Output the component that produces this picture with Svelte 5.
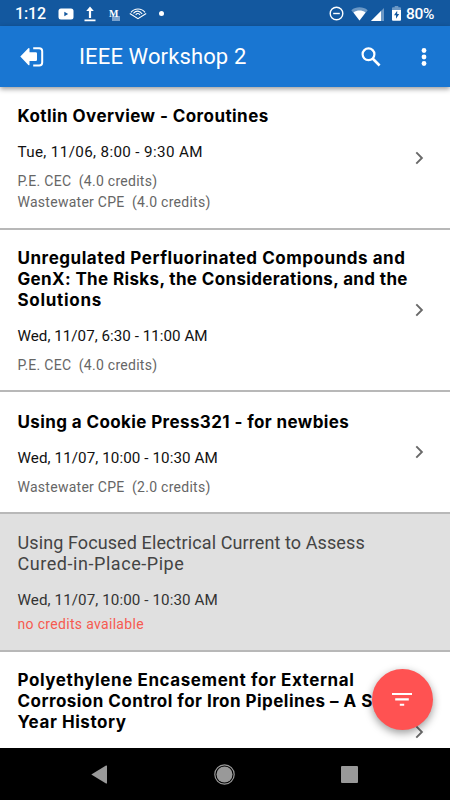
<script>
  const sessions = [
    {
      height: 143, top: 18,
      lines: [['Kotlin Overview - Coroutines', 0.43]],
      date: ['Tue, 11/06, 8:00 - 9:30 AM', 0.36],
      credits: [['P.E. CEC', '(4.0 credits)'], ['Wastewater CPE', '(4.0 credits)']]
    },
    {
      height: 162, top: 17,
      lines: [
        ['Unregulated Perfluorinated Compounds and', 0.54],
        ['GenX: The Risks, the Considerations, and the', 0.36],
        ['Solutions', 0.7]
      ],
      date: ['Wed, 11/07, 6:30 - 11:00 AM', 0.02],
      credits: [['P.E. CEC', '(4.0 credits)']]
    },
    {
      height: 122, top: 18.5,
      lines: [['Using a Cookie Press321 - for newbies', 0.39]],
      date: ['Wed, 11/07, 10:00 - 10:30 AM', 0.08],
      credits: [['Wastewater CPE', '(2.0 credits)']]
    },
    {
      height: 138, top: 17, disabled: true,
      lines: [['Using Focused Electrical Current to Assess', 0.1], ['Cured-in-Place-Pipe', 0.55]],
      date: ['Wed, 11/07, 10:00 - 10:30 AM', 0.08],
      credits: []
    },
    {
      height: 162, top: 17,
      lines: [
        ['Polyethylene Encasement for External', 0.58],
        ['Corrosion Control for Iron Pipelines – A Sixty', 0.46],
        ['Year History', 0.55]
      ],
      credits: []
    }
  ];
</script>

<div class="screen">
  <div class="status">
    <span class="clock">1:12</span>
    <svg class="yt" width="16" height="12" viewBox="0 0 16 12"><rect x=".5" y=".5" width="15" height="11" rx="2.5" fill="#fff" /><path d="M6.3 3.7v4.6L10.2 6z" fill="#13589f" /></svg>
    <svg class="up" width="12" height="16" viewBox="0 0 12 16"><path d="M6 .5 9.8 5H7.1v7H4.9V5H2.2zM.5 13.4h11v1.8H.5z" fill="#fff" /></svg>
    <span class="m-icon"><i></i><b>M</b></span>
    <svg class="aud" width="18" height="12" viewBox="0 0 18 12" fill="none" stroke="#fff" stroke-width="1.1"><path d="M.8 5.500 9 10.700l8.200-5.200M2 4.400C5.500-.2 12.500-.2 16 4.400M4.400 5.400c2.800-3.300 6.400-3 8.800.6M6.700 6.800c1.500-1.900 3.300-1.600 4.300.3" /></svg>
    <span class="dot"></span>
    <span class="grow"></span>
    <svg class="dnd" width="15" height="15" viewBox="0 0 15 15" fill="none" stroke="#fff" stroke-width="1.4"><circle cx="7.5" cy="7.5" r="6.3" /><path d="M4.2 7.500h6.600" /></svg>
    <svg class="wifi" width="17" height="14" viewBox="0 0 17 14"><path d="M.3 3.200C5-.6 12-.6 16.700 3.200L8.500 13.500z" fill="#6c98c5" /><path d="M2.500 5.500c3.500-2.600 8.500-2.600 12 0l-6 8z" fill="#fff" /></svg>
    <svg class="cell" width="13" height="13" viewBox="0 0 13 13"><path d="M0 13 13 0v13z" fill="#6c98c5" /><path d="M0 13 10 3v10z" fill="#fff" /></svg>
    <svg class="bat" width="9" height="15" viewBox="0 0 9 15"><path d="M2.700 0h3.600v1.300H8q1 0 1 1V4H0V2.300q0-1 1-1h1.700z" fill="#6c98c5" /><path d="M0 4h9v9.800q0 1-1 1H1q-1 0-1-1z" fill="#fff" /><path d="M5.200 4.800 2 9.200h2v3.600l3.200-4.700H5.200z" fill="#13589f" /></svg>
    <span class="pct">80%</span>
  </div>

  <header>
    <svg class="exit" width="24" height="20" viewBox="0 0 24 20"><path d="M.3 9.600 8.300 1.200Q9.500.5 9.500 1.800V5.200h6.300q1.200 0 1.200 1.200v6.400q0 1.200-1.200 1.200H9.500v3.400q0 1.300-1.200.6z" fill="#fff" /><path d="M13.200 1.200h6q3 0 3 3v11.400q0 3-3 3h-6" fill="none" stroke="#fff" stroke-width="2" /></svg>
    <h1>IEEE Workshop 2</h1>
    <svg class="search" width="20" height="20" viewBox="0 0 20 20" fill="none" stroke="#fff" stroke-width="2.200"><circle cx="7.500" cy="7.300" r="5.900" /><path d="m11.600 11.500 7 7" stroke-width="2.600" /></svg>
    <svg class="more" width="6" height="20" viewBox="0 0 6 20" fill="#fff"><circle cx="3" cy="3.500" r="2.400" /><circle cx="3" cy="10" r="2.400" /><circle cx="3" cy="16.500" r="2.400" /></svg>
  </header>

  <main>
    {#each sessions as s}
      <article class:disabled={s.disabled} style="height: {s.height}px; padding-top: {s.top}px">
        <div class="body">
          <h2>
            {#each s.lines as [text, spacing]}
              <span style="letter-spacing: {spacing}px">{text}</span>
            {/each}
          </h2>
          {#if s.date}<p class="date" style="letter-spacing: {s.date[1]}px">{s.date[0]}</p>{/if}
          {#if s.disabled}<p class="none">no credits available</p>{/if}
          {#each s.credits as [kind, amount]}
            <p class="credit">{kind}&nbsp; {amount}</p>
          {/each}
        </div>
        {#if !s.disabled}
          <svg class="chevron" style="margin-top: {-s.top}px" width="9" height="14" viewBox="0 0 9 14"><path d="m1.300 1.300 5.600 5.700-5.600 5.700" fill="none" stroke="#696969" stroke-width="1.900" /></svg>
        {/if}
      </article>
    {/each}
    <button class="fab" aria-label="Filter">
      <svg width="20" height="15" viewBox="0 0 20 15" fill="#fff"><path d="M0 1h20v2H0zM3.200 6.200h13.600v2.200H3.200zM7.800 11.800h4.400v2H7.800z" /></svg>
    </button>
  </main>

  <nav>
    <svg width="17" height="19" viewBox="0 0 17 19"><path d="M.3 9.500 15 .6q1-.5 1 .5v16.800q0 1-1 .5z" fill="#999" /></svg>
    <svg width="21" height="21" viewBox="0 0 21 21"><circle cx="10.500" cy="10.500" r="9.700" fill="none" stroke="#999" stroke-width="1.200" /><circle cx="10.500" cy="10.500" r="8" fill="#999" /></svg>
    <svg width="17" height="17" viewBox="0 0 17 17"><rect width="17" height="17" rx="1" fill="#999" /></svg>
  </nav>
</div>

<style>
  :global(body) { margin: 0; }
  .screen { width: 450px; height: 800px; display: flex; flex-direction: column; overflow: hidden; background: #fff; font-family: Roboto, "Liberation Sans", sans-serif; }
  svg { display: block; flex: none; }
  .status { height: 26px; flex: none; display: flex; align-items: center; box-sizing: border-box; padding: 1px 15px 0 15px; background: #13589f; color: #fff; }
  .clock { width: 42.5px; font-size: 16px; font-weight: 500; letter-spacing: -0.1px; line-height: 26px; }
  .up { margin-left: 10.5px; }
  .m-icon { position: relative; width: 11px; margin-left: 13px; font: bold 10px/14px "Liberation Serif", serif; }
  .m-icon b { position: relative; }
  .m-icon i { position: absolute; left: 3px; top: 9px; width: 8px; height: 5px; background: #7ba3ce; }
  .aud { margin-left: 9px; }
  .dot { width: 5px; height: 5px; margin-left: 12px; border-radius: 50%; background: #fff; }
  .grow { flex: 1; }
  .wifi { margin-left: 7px; }
  .cell { margin-left: 3px; margin-top: 1px; }
  .bat { margin-left: 8px; }
  .pct { width: 29px; margin-left: 5px; font-size: 15.5px; font-weight: 500; letter-spacing: -0.3px; }

  header { position: relative; z-index: 1; height: 61px; flex: none; display: flex; align-items: center; box-sizing: border-box; padding: 0 23px 0 20px; background: #1976d2; color: #fff; box-shadow: 0 2px 5px rgba(0, 0, 0, 0.4); }
  h1 { flex: 1; margin: 1px 0 0 35px; font-size: 22px; line-height: 30px; font-weight: 400; letter-spacing: 0.13px; }
  .more { margin-left: 40px; }

  main { position: relative; flex: 1; min-height: 0; overflow: hidden; }
  article { display: flex; align-items: flex-start; box-sizing: border-box; padding-left: 17.5px; padding-right: 26px; border-bottom: 2px solid #b8b8b8; }
  .body { flex: 1; min-width: 0; }
  h2 { margin: 0 0 15px; padding-top: 1px; font-family: Inter, Roboto, sans-serif; font-size: 17px; line-height: 21px; font-weight: 700; color: #000; }
  h2 span { display: block; white-space: nowrap; }
  p { margin: 0; line-height: 21px; white-space: nowrap; }
  .date { font-size: 15.2px; color: #111; margin-bottom: 8px; }
  .credit { font-size: 14px; color: #666; letter-spacing: 0.27px; }
  .chevron { align-self: center; }
  .disabled { background: #e0e0e0; }
  .disabled h2 { margin-bottom: 16px; font-family: Roboto, sans-serif; font-size: 18px; font-weight: 400; color: #444; }
  .disabled .date { color: #333; margin-bottom: 3px; }
  .none { font-size: 14px; color: #f65a50; letter-spacing: 0.32px; }
  .fab { position: absolute; left: 371.5px; top: 581.5px; width: 61px; height: 61px; display: flex; align-items: center; justify-content: center; padding: 0; border: 0; border-radius: 50%; background: #ff5252; box-shadow: 0 3px 8px rgba(0, 0, 0, 0.4); }
  nav { height: 52px; flex: none; display: flex; align-items: center; justify-content: space-between; box-sizing: border-box; padding: 0 92px 0 91px; background: #000; }
</style>
